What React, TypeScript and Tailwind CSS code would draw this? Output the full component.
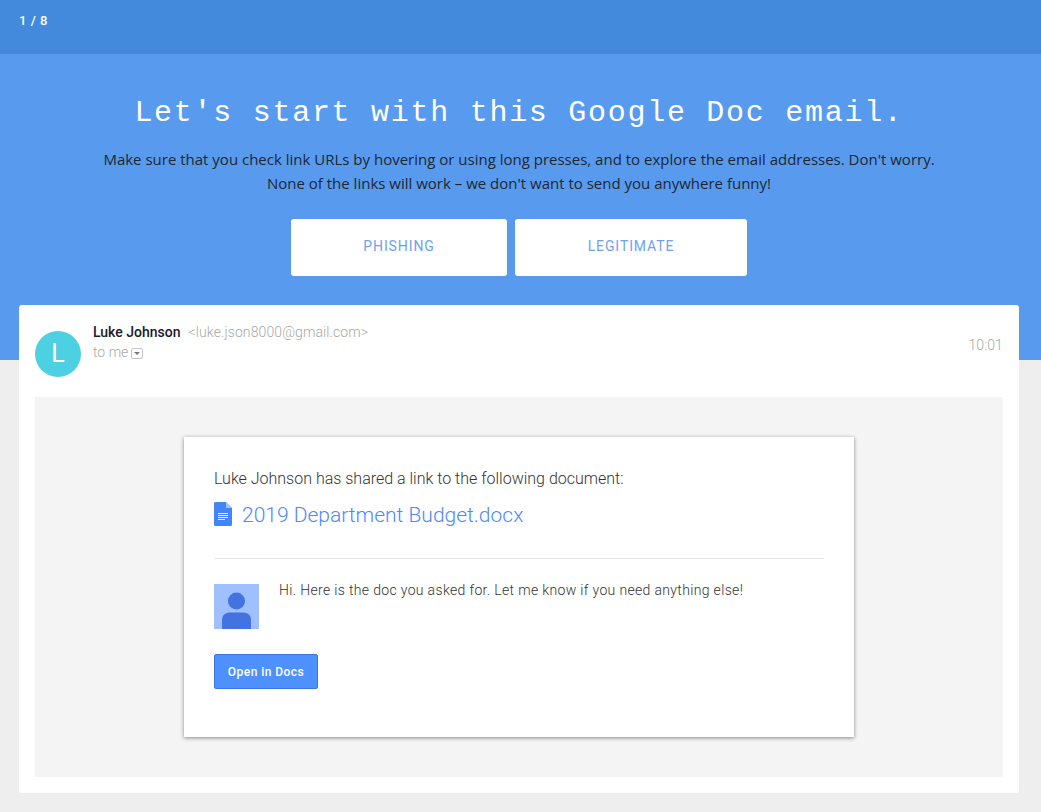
import React from 'react'

function DocIcon() {
    return (
        <svg width="18" height="24" viewBox="0 0 18 24" className="shrink-0 mt-[-2px]">
            <path d="M1.500 0H12l6 6v16.500A1.500 1.500 0 0 1 16.500 24h-15A1.500 1.500 0 0 1 0 22.500v-21A1.500 1.500 0 0 1 1.500 0z" fill="#4285f4" />
            <path d="M12 0l6 6h-6z" fill="#a1c2fa" />
            <path d="M4 11h10v1H4zM4 13h10v1H4zM4 15h10v1H4zM4 17h7v1H4z" fill="#f1f1f1" />
        </svg>
    )
}

function AvatarIcon() {
    return (
        <svg width="45" height="45" viewBox="0 0 45 45" className="shrink-0">
            <rect width="45" height="45" fill="#9fc0ff" />
            <circle cx="22.500" cy="17" r="8.500" fill="#4373e0" />
            <path d="M8 45V35.500c0-4.500 4-7 8-7h13c4 0 8 2.500 8 7V45z" fill="#4373e0" />
        </svg>
    )
}

function App() {
    return (
        <div className="min-h-[812px] bg-[#eeeeee] font-['Roboto',sans-serif]">
            <div className="bg-[#589bee] h-[360px]">
                <div className="h-[54px] bg-[#448adc] px-[19px] pt-[13px] text-[13px] leading-4 font-medium tracking-[0.55px] text-white">1 / 8</div>
                <div className="w-[1038px]">
                    <h1 className="mt-[39px] text-center font-['Liberation_Mono',monospace] text-[30px] leading-10 tracking-[1.72px] text-white">Let's start with this Google Doc email.</h1>
                    <p className="mt-[14px] text-center font-['Open_Sans',sans-serif] text-[15px] leading-6 text-[#1d2733]">
                        Make sure that you check link URLs by hovering or using long presses, and to explore the email addresses. Don't worry.
                        <br />
                        None of the links will work – we don't want to send you anywhere funny!
                    </p>
                    <div className="mt-6 flex justify-center gap-2">
                        <button className="h-[57px] w-[216px] rounded-[3px] bg-white pb-[3px] text-sm tracking-[0.9px] text-[#6ea2f0]">PHISHING</button>
                        <button className="h-[57px] w-[232px] rounded-[3px] bg-white pb-[3px] text-sm tracking-[0.9px] text-[#6ea2f0]">LEGITIMATE</button>
                    </div>
                </div>
            </div>
            <div className="relative ml-[19px] mt-[-55px] h-[488px] w-[1000px] rounded-[3px] bg-white px-4">
                <div className="flex h-[92px] pt-[26px]">
                    <div className="flex h-[46px] w-[46px] shrink-0 items-center justify-center rounded-full bg-[#4dd0e1] text-[25px] text-white">L</div>
                    <div className="ml-3 mt-[-9px] flex-1">
                        <div className="flex items-baseline text-sm leading-5">
                            <span className="font-medium text-[#1a1a2a]">Luke Johnson</span>
                            <span className="ml-2 font-light tracking-[0.1px] text-[#a8a8a8]">&lt;luke.json8000@gmail.com&gt;</span>
                        </div>
                        <div className="flex items-center text-sm font-light leading-5 text-[#a8a8a8]">
                            to me
                            <span className="ml-[3px] mt-[3px] flex h-[11px] w-3 items-center justify-center rounded-[2px] border border-[#c4c4c4]">
                                <span className="h-0 w-0 border-x-[3px] border-t-[3px] border-x-transparent border-t-[#777777]" />
                            </span>
                        </div>
                    </div>
                    <div className="mt-1 text-sm font-light leading-5 tracking-[0.1px] text-[#a8a8a8]">10:01</div>
                </div>
                <div className="h-[380px] bg-[#f4f4f4] pt-10">
                    <div className="mx-auto h-[300px] w-[670px] bg-white px-[30px] pt-8 shadow-[0_1px_4px_rgba(0,0,0,0.45)]">
                        <div className="text-base font-light leading-5 text-[#333333]">Luke Johnson has shared a link to the following document:</div>
                        <div className="mt-3 flex items-center">
                            <DocIcon />
                            <span className="ml-2.5 text-[21px] font-light leading-7 text-[#4d88f8]">2019 Department Budget.docx</span>
                        </div>
                        <div className="mt-[29px] h-px bg-[#e8e8e8]" />
                        <div className="mt-[25px] flex">
                            <AvatarIcon />
                            <div className="ml-5 text-sm font-light leading-3 tracking-[0.34px] text-[#333333]">Hi. Here is the doc you asked for. Let me know if you need anything else!</div>
                        </div>
                        <button className="mt-[25px] h-[35px] w-[104px] rounded-[2px] border border-[#3b78e7] bg-[#4d90fe] text-xs font-medium tracking-[0.45px] text-white">Open in Docs</button>
                    </div>
                </div>
            </div>
        </div>
    )
}

export default App
